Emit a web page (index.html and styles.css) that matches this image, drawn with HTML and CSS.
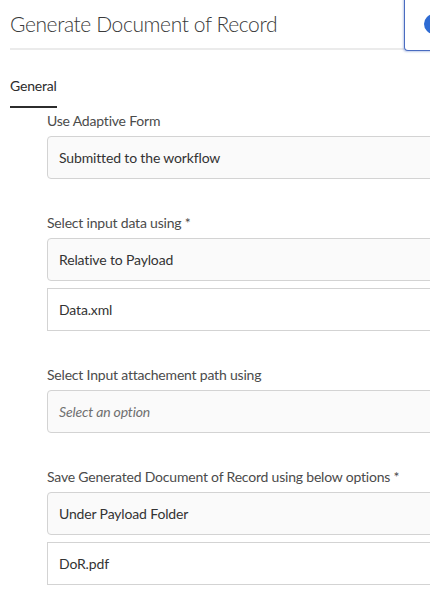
FILE: index.html
```html
<!DOCTYPE html>
<html lang="en">
<head>
<meta charset="utf-8">
<title>Generate Document of Record</title>
<link rel="stylesheet" href="styles.css">
</head>
<body>
<div class="page">
  <header class="header">
    <div class="title-area">
      <h1 class="title">Generate Document of Record</h1>
    </div>
    <div class="side-box"><span class="dot"></span></div>
  </header>

  <nav class="tabs">
    <span class="tab active">General</span>
  </nav>

  <form class="form">
    <div class="group">
      <label class="label">Use Adaptive Form</label>
      <div class="field select">Submitted to the workflow</div>
    </div>

    <div class="group">
      <label class="label">Select input data using *</label>
      <div class="field select">Relative to Payload</div>
      <div class="field text">Data.xml</div>
    </div>

    <div class="group">
      <label class="label">Select Input attachement path using</label>
      <div class="field select placeholder">Select an option</div>
    </div>

    <div class="group">
      <label class="label">Save Generated Document of Record using below options *</label>
      <div class="field select">Under Payload Folder</div>
      <div class="field text">DoR.pdf</div>
    </div>
  </form>
</div>
</body>
</html>
```

FILE: styles.css
```css
html, body {
  margin: 0;
  padding: 0;
  background: #ffffff;
  overflow: hidden;
}

.page {
  width: 430px;
  height: 611px;
  overflow: hidden;
  font-family: Lato, "Open Sans", sans-serif;
  color: #2c2c2c;
}

.header {
  display: flex;
  align-items: flex-start;
  padding-left: 10px;
}

.title-area {
  flex: 1;
  height: 48px;
  border-bottom: 2px solid #ebebeb;
  display: flex;
  align-items: center;
}

.title {
  margin: 0;
  font-size: 21px;
  letter-spacing: -0.4px;
  font-weight: 300;
  color: #3a3a3a;
  line-height: 1;
  padding-bottom: 2px;
}

.side-box {
  width: 40px;
  height: 53px;
  margin-top: -2px;
  margin-right: -14px;
  box-sizing: border-box;
  border: 1px solid #4a6cc0;
  border-top: none;
  border-radius: 0 0 0 4px;
  box-shadow: -1px 1px 2px rgba(74, 108, 192, 0.35);
  position: relative;
  background: #fff;
}

.dot {
  position: absolute;
  left: 19px;
  top: 16px;
  width: 20px;
  height: 20px;
  border-radius: 50%;
  background: #2e6bd3;
}

.tabs {
  display: flex;
  padding-left: 10px;
  margin-top: 25px;
}

.tab {
  font-size: 14px;
  letter-spacing: -0.2px;
  line-height: 20px;
  color: #2c2c2c;
  padding-bottom: 10px;
  border-bottom: 2px solid #2c2c2c;
}

.form {
  display: flex;
  flex-direction: column;
  gap: 34px;
  padding: 3px 0 0 47px;
}

.group {
  display: flex;
  flex-direction: column;
  gap: 7px;
}

.label {
  font-size: 14px;
  letter-spacing: -0.2px;
  line-height: 20px;
  color: #4b4b4b;
  margin-bottom: -2px;
}

.field {
  width: 420px;
  height: 43px;
  box-sizing: border-box;
  border: 1px solid #d3d3d3;
  padding: 0 11px;
  display: flex;
  align-items: center;
  font-size: 14px;
  letter-spacing: -0.15px;
  color: #333333;
}

.select {
  background: #fafafa;
  border-radius: 4px;
}

.text {
  background: #ffffff;
  border-radius: 0;
}

.placeholder {
  font-style: italic;
  color: #707070;
}
```
